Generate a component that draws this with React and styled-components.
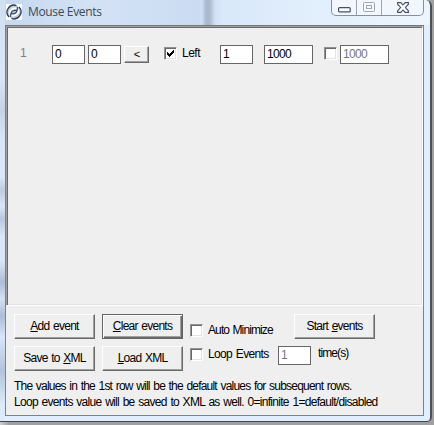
import { useState } from "react";
import styled, { createGlobalStyle } from "styled-components";

const App = () => {
	const [event, setEvent] = useState(firstEvent);
	const [autoMinimize, setAutoMinimize] = useState(false);
	const [loop, setLoop] = useState(false);
	const [times, setTimes] = useState("1");

	const handleEvent = (key) => (e) => {
		setEvent({ ...event, [key]: e.target.value });
	};

	const handleCheck = (key) => () => {
		setEvent({ ...event, [key]: !event[key] });
	};

	return (
		<Desktop>
			<GlobalStyle />
			<Window>
				<TitleBar>
					<AppIcon />
					<Title>Mouse Events</Title>
					<Captions />
				</TitleBar>
				<Client>
					<EventList>
						<RowNumber>1</RowNumber>
						<Field $w={33} value={event.x} onChange={handleEvent("x")} />
						<Field $w={33} $ml={3} value={event.y} onChange={handleEvent("y")} />
						<PickButton>&lt;</PickButton>
						<Check $ml={15} checked={event.left} onClick={handleCheck("left")} />
						<LeftLabel>Left</LeftLabel>
						<Field $w={33} value={event.clicks} onChange={handleEvent("clicks")} />
						<Field $w={49} $ml={11} value={event.delay} onChange={handleEvent("delay")} />
						<Check $ml={11} checked={event.hold} onClick={handleCheck("hold")} />
						<Field $w={49} $ml={3} $dim value={event.holdTime} onChange={handleEvent("holdTime")} />
					</EventList>
					<Controls>
						<ButtonGrid>
							<Button><u>A</u>dd event</Button>
							<Button $focused><u>C</u>lear events</Button>
							<Button>Save to <u>X</u>ML</Button>
							<Button><u>L</u>oad XML</Button>
						</ButtonGrid>
						<Options>
							<OptionRow>
								<Check checked={autoMinimize} onClick={() => setAutoMinimize(!autoMinimize)} />
								<OptionLabel>Auto Minimize</OptionLabel>
							</OptionRow>
							<OptionRow>
								<Check checked={loop} onClick={() => setLoop(!loop)} />
								<OptionLabel $spacing={-0.65}>Loop Events</OptionLabel>
							</OptionRow>
						</Options>
						<StartColumn>
							<StartButton>Start <u>e</u>vents</StartButton>
							<TimesRow>
								<Field $w={33} $dim value={times} onChange={(e) => setTimes(e.target.value)} />
								<TimesLabel>time(s)</TimesLabel>
							</TimesRow>
						</StartColumn>
					</Controls>
					<Notes>
						<Note>The values in the 1st row will be the default values for subsequent rows.</Note>
						<Note $spacing={-0.7}>Loop events value will be saved to XML as well. 0=infinite 1=default/disabled</Note>
					</Notes>
				</Client>
			</Window>
		</Desktop>
	);
};

const Check = ({ checked, onClick, $ml }) => (
	<CheckBox type="button" role="checkbox" aria-checked={checked} onClick={onClick} $ml={$ml}>
		{checked && (
			<svg width="9" height="9" viewBox="0 0 9 9" shapeRendering="crispEdges">
				<path d="M1 3h1v1h1v1h1V4h1V3h1V2h1V1h1v3H7v1H6v1H5v1H4v1H3V7H2V6H1z" fill="#000" />
			</svg>
		)}
	</CheckBox>
);

const AppIcon = () => (
	<IconBox>
		<svg width="16" height="16" viewBox="0 0 16 16" fill="none">
			<circle cx="8" cy="8" r="7" fill="#c3d0e0" />
			<path d="M3 13A7 7 0 0 1 10.5 1.6M13 3A7 7 0 0 1 5.5 14.4" stroke="#2c3a50" strokeWidth="1.3" />
			<path d="M3.6 10.5C3 6.5 6.5 3.4 10.6 4.6M12.4 5.5c.6 4-2.9 7.1-7 5.9" stroke="#fff" strokeWidth="1.6" />
			<path d="M5.2 9.8C5 7.4 7 6 11.2 6.2L11.4 3M10.8 6.2C11 8.6 9 10 4.8 9.8L4.6 13" stroke="#34445b" strokeWidth="1.1" />
		</svg>
	</IconBox>
);

const Captions = () => (
	<CaptionBar>
		<CaptionButton $w={25} aria-label="Minimize">
			<svg width="13" height="6" viewBox="0 0 13 6">
				<rect x=".6" y=".6" width="11.6" height="4.3" rx="1" fill="#fff" stroke="#454c67" strokeWidth="1.2" />
			</svg>
		</CaptionButton>
		<CaptionButton $w={25} $top={2} aria-label="Maximize">
			<svg width="12" height="10" viewBox="0 0 12 10" fill="#f6f9fc" stroke="#a0a6ac">
				<rect x=".5" y=".5" width="11" height="9" rx="1" />
				<rect x="3.5" y="3.5" width="5" height="3" />
			</svg>
		</CaptionButton>
		<CaptionButton $w={42} $top={2} aria-label="Close">
			<svg width="12" height="11" viewBox="0 0 12 11">
				<path d="M.6.6h3.2L6 3 8.2.6h3.2v1.6L8.4 5.5l3 3.3v1.6H8.2L6 8l-2.2 2.4H.6V8.8l3-3.3-3-3.3z" fill="#fff" stroke="#454c67" strokeWidth="1.1" />
			</svg>
		</CaptionButton>
	</CaptionBar>
);

const GlobalStyle = createGlobalStyle`
	* {
		box-sizing: border-box;
	}

	body {
		margin: 0;
		overflow: hidden;
		font: 12px/14px "Liberation Sans", Arial, sans-serif;
		color: #000;
	}

	u {
		text-decoration: underline;
		text-decoration-thickness: 1px;
		text-underline-offset: 1px;
	}
`;

const Desktop = styled.div`
	width: 434px;
	height: 425px;
	padding-bottom: 3px;
	padding-right: 2px;
	background: linear-gradient(90deg, #d0d0d0, #a0a0a0 2%, #a0a0a0);
`;

const Window = styled.div`
	width: 432px;
	height: 422px;
	padding: 0 7px 5px 5px;
	border-right: 2px solid #4d5054;
	border-bottom: 1px solid #43474b;
	border-radius: 0 6px 5px 0;
	background:
		linear-gradient(180deg, #d0e0f0 0, #d9e7f8 18%, #c5d3e5 26%, #d7e5f8 33%, #dbe8f9 42%, #becce0 45%, #d9e6f7 49%, #b8c7dc 52%, #d9e6f7 56%, #d9e6f7 62%, #adbdd3 67%, #d3e1f2 71%, #adbdd3 75%, #d7e6f8 80%, #b2c3da 88%, #dcebfa 96%) 0 0 / 5px 100% no-repeat,
		linear-gradient(90deg, transparent 202px, #a9bad0 206px, #abbcd0 210px, #d2e2f3 215px, transparent 218px) 0 0 / 100% 25px no-repeat,
		linear-gradient(90deg, #c6d8ee, #d3e2f5 22%, #cbdcf2 46%, #d9e8fa 52%, #e2effc 75%, #edf6fd) 0 0 / 100% 25px no-repeat,
		#e0eefd;
`;

const TitleBar = styled.div`
	display: flex;
	align-items: flex-start;
	height: 25px;
`;

const IconBox = styled.div`
	display: flex;
	flex: none;
	width: 16px;
	height: 16px;
	margin: 4px 0 0 1px;
	background: #fff;
`;

const Title = styled.h1`
	margin: 4px 0 0 6px;
	font: 12px/16px "Open Sans", "Noto Sans", sans-serif;
	letter-spacing: -0.35px;
	color: #414854;
`;

const CaptionBar = styled.div`
	display: flex;
	width: 93px;
	height: 16px;
	margin-left: auto;
	margin-right: -1px;
	border: 1px solid #84909b;
	border-top: none;
	border-radius: 0 0 5px 5px;
	background: #f1f7fc;
	overflow: hidden;
`;

const CaptionButton = styled.button`
	display: flex;
	justify-content: center;
	align-items: flex-start;
	width: ${(props) => props.$w}px;
	flex: none;
	padding: ${(props) => props.$top ?? 7}px 0 0;
	border: none;
	border-right: 1px solid #9aa5af;
	background: none;

	&:last-child {
		border-right: none;
	}
`;

const Client = styled.div`
	width: 419px;
	height: 391px;
	border: 1px solid #78838f;
	border-top-color: #777;
	background: #efefef;
`;

const EventList = styled.div`
	display: flex;
	align-items: flex-start;
	height: 280px;
	padding: 18px 0 0 13px;
	border: 1px solid;
	border-color: #a0a0a0 #fff #fff #a0a0a0;
	box-shadow: inset 1px 1px #696969, inset -1px -1px #e3e3e3;
`;

const RowNumber = styled.span`
	width: 32px;
	padding-top: 1px;
	color: #808080;
`;

const Field = styled.input`
	width: ${(props) => props.$w}px;
	height: 19px;
	flex: none;
	margin: 0 0 0 ${(props) => props.$ml ?? 0}px;
	padding: 0 0 2px 2px;
	border: 1px solid #666;
	border-radius: 0;
	outline: none;
	font: inherit;
	letter-spacing: -0.65px;
	background: #fff;
	color: ${(props) => (props.$dim ? "#73777d" : "#000")};
`;

const Button = styled.button`
	width: 81px;
	height: 25px;
	padding: 0 0 1px;
	border: 1px solid;
	border-color: #fff #696969 #696969 #fff;
	box-shadow: inset -1px -1px #a0a0a0;
	outline: none;
	font: inherit;
	letter-spacing: -0.75px;
	word-spacing: 1px;
	background: #efefef;
	color: #000;

	${(props) =>
		props.$focused &&
		`
		border-color: #646464;
		box-shadow: inset 1px 1px #fff, inset -1px -1px #696969, inset -2px -2px #a0a0a0;
	`}
`;

const PickButton = styled(Button)`
	width: 25px;
	height: 17px;
	flex: none;
	margin: 1px 0 0 3px;
	font-size: 11px;
	line-height: 13px;
`;

const CheckBox = styled.button`
	display: flex;
	justify-content: center;
	align-items: center;
	width: 13px;
	height: 13px;
	flex: none;
	margin: 2px 0 0 ${(props) => props.$ml ?? 0}px;
	padding: 0;
	border: 1px solid;
	border-color: #919191 #fff #fff #919191;
	box-shadow: inset 1px 1px #696969, inset -1px -1px #e3e3e3;
	background: #fff;
	color: #000;
`;

const LeftLabel = styled.span`
	width: 38px;
	flex: none;
	margin-left: 5px;
	padding-top: 1px;
	letter-spacing: -0.5px;
`;

const Controls = styled.div`
	display: flex;
	height: 68px;
	padding: 8px 0 0 8px;
`;

const ButtonGrid = styled.div`
	display: grid;
	grid-template-columns: 81px 81px;
	grid-auto-rows: 25px;
	gap: 7px;
	flex: none;
`;

const Options = styled.div`
	display: flex;
	flex-direction: column;
	gap: 11px;
	width: 95px;
	flex: none;
	padding: 8px 0 0 7px;
`;

const OptionRow = styled.label`
	display: flex;
	height: 13px;
`;

const OptionLabel = styled.span`
	margin: 1px 0 0 5px;
	white-space: nowrap;
	letter-spacing: ${(props) => props.$spacing ?? -0.9}px;
	word-spacing: 1px;
`;

const StartColumn = styled.div`
	display: flex;
	flex-direction: column;
	align-items: flex-start;
	gap: 7px;
`;

const StartButton = styled(Button)`
	margin-left: 16px;
`;

const TimesRow = styled.div`
	display: flex;
`;

const TimesLabel = styled.span`
	margin-left: 7px;
	letter-spacing: -0.9px;
`;

const Notes = styled.div`
	padding: 4px 0 0 8px;
`;

const Note = styled.p`
	margin: 0;
	line-height: 16px;
	white-space: nowrap;
	letter-spacing: ${(props) => props.$spacing ?? -0.79}px;
	word-spacing: 1px;
`;

export default App;

const firstEvent = {
	x: "0",
	y: "0",
	left: true,
	clicks: "1",
	delay: "1000",
	hold: false,
	holdTime: "1000",
};
